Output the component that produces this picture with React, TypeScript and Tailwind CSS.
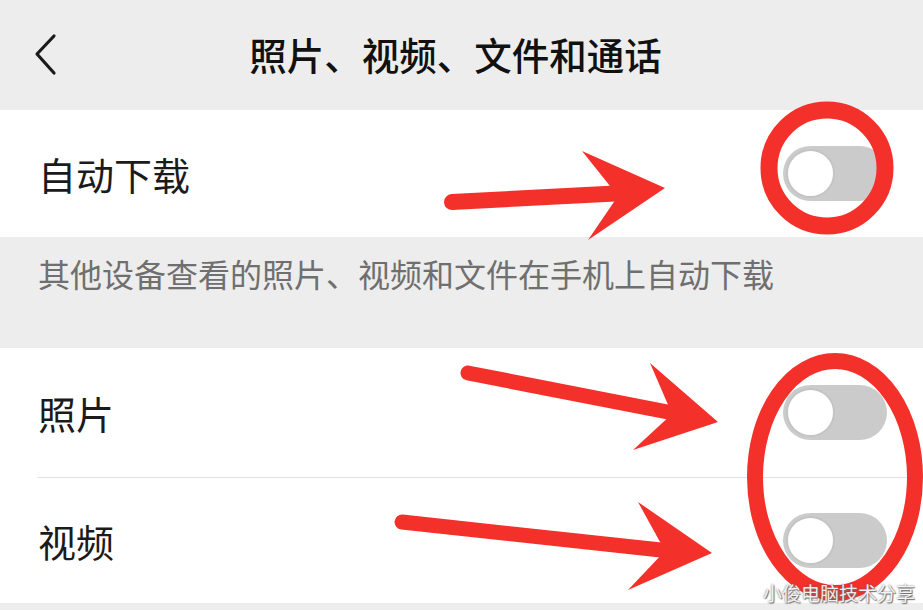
import React from 'react';

// Settings page: photos, videos, files & calls (with red markup on top)
const Toggle: React.FC = () => (
  <div className="w-[104px] h-[55px] rounded-full bg-[#cbcbcb] flex items-center pl-[3px] shrink-0">
    <div className="w-[49px] h-[49px] rounded-full bg-white border-[2px] border-[#c4c4c4]" />
  </div>
);

const SettingRow: React.FC<{ label: string; height: string; toggle?: boolean }> = ({ label, height, toggle = true }) => (
  <div className={`flex items-center justify-between pl-[38px] pr-[36px] bg-white ${height}`}>
    <span className="text-[38px] leading-none text-[#1b1b1b]">{label}</span>
    {toggle && <Toggle />}
  </div>
);

const Markup: React.FC = () => (
  <svg className="absolute inset-0 pointer-events-none" width="923" height="610" viewBox="0 0 923 610">
    <g fill="#f4302b" stroke="none">
      {/* arrow 1 */}
      <line x1="452" y1="202" x2="625" y2="193" stroke="#f4302b" strokeWidth="16" strokeLinecap="round" />
      <polygon points="582,151 665,188 588,240 618,196" />
      {/* arrow 2 */}
      <line x1="468" y1="373" x2="678" y2="414" stroke="#f4302b" strokeWidth="15" strokeLinecap="round" />
      <polygon points="650,363 718,422 633,450 672,414" />
      {/* arrow 3 */}
      <line x1="402" y1="522" x2="670" y2="551" stroke="#f4302b" strokeWidth="15" strokeLinecap="round" />
      <polygon points="638,502 712,553 628,590 665,551" />
    </g>
    <ellipse cx="827" cy="168" rx="58" ry="58" fill="none" stroke="#f4302b" strokeWidth="17" />
    <ellipse cx="835" cy="477" rx="80" ry="116" fill="none" stroke="#f4302b" strokeWidth="16" />
  </svg>
);

export default function App() {
  return (
    <div
      className="relative w-[923px] h-[610px] overflow-hidden bg-[#ededed] flex flex-col"
      style={{ fontFamily: '"Noto Sans CJK SC", "Noto Sans", sans-serif' }}
    >
      {/* Header */}
      <div className="h-[110px] shrink-0 flex items-center relative">
        <svg className="absolute left-[30px] top-[30px]" width="34" height="50" viewBox="0 0 34 50">
          <polyline points="24,6 7,24 24,43" fill="none" stroke="#1b1b1b" strokeWidth="3.2" strokeLinecap="round" strokeLinejoin="round" />
        </svg>
        <h1 className="w-full text-center text-[37.5px] font-medium text-[#111] leading-none pb-[3px] pr-[12px]">
          照片、视频、文件和通话
        </h1>
      </div>

      <SettingRow label="自动下载" height="h-[127px]" />

      <div className="h-[111px] shrink-0 px-[38px] pt-[16px]">
        <p className="text-[32px] leading-[40px] text-[#6f6f6f] whitespace-nowrap">其他设备查看的照片、视频和文件在手机上自动下载</p>
      </div>

      <SettingRow label="照片" height="h-[129px]" />
      <div className="bg-white pl-[37px] shrink-0">
        <div className="h-px bg-[#e3e3e3]" />
      </div>
      <SettingRow label="视频" height="h-[125px]" />
      <div className="flex-1" />

      <Markup />

      {/* watermark */}
      <span
        className="absolute right-[8px] bottom-[8px] text-[19px] leading-none text-white/90"
        style={{ textShadow: '0 0 2px #555, 1px 1px 1px #777' }}
      >
        小俊电脑技术分享
      </span>
    </div>
  );
}
